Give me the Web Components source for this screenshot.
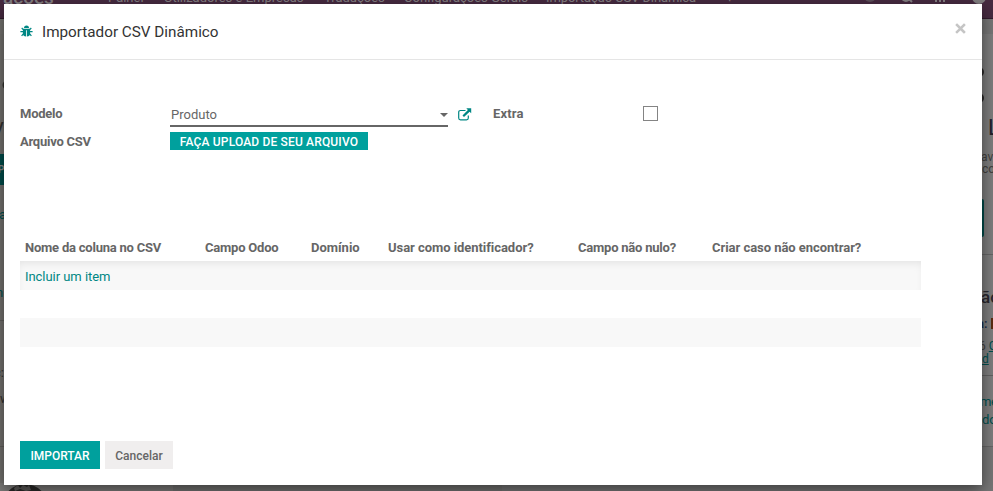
<!DOCTYPE html>
<html lang="pt">
<head>
<meta charset="utf-8">
<title>Importador CSV Dinâmico</title>
<style>
html,body{margin:0;height:491px;overflow:hidden}
body{font-family:Roboto,"Noto Sans",sans-serif;font-size:13px;color:#666;background:#7d7b79}
</style>
</head>
<body>
<app-shell>
  <app-backdrop></app-backdrop>
  <modal-dialog slot="dialog" heading="Importador CSV Dinâmico">
    <import-form></import-form>
    <field-table></field-table>
    <action-button slot="footer" kind="primary">IMPORTAR</action-button>
    <action-button slot="footer">Cancelar</action-button>
  </modal-dialog>
</app-shell>
<script>
function define(name, html) {
  customElements.define(name, class extends HTMLElement {
    constructor() {
      super();
      const t = document.createElement('template');
      t.innerHTML = html;
      this.attachShadow({mode: 'open'}).append(t.content.cloneNode(true));
    }
    connectedCallback() {
      const h = this.shadowRoot.querySelector('[data-heading]');
      if (h) h.textContent = this.getAttribute('heading');
    }
  });
}

define('app-shell', `<style>
:host{display:block;position:relative;width:993px;height:491px;overflow:hidden}
::slotted([slot=dialog]){position:absolute;left:4px;top:4px}
</style><slot></slot><slot name="dialog"></slot>`);

define('nav-strip', `<style>
:host{display:block;height:18px;background:#472b41;border-bottom:1px solid #321c2d;overflow:hidden;color:#858184;font-size:13px}
nav{display:flex;white-space:nowrap;margin-top:-11px;line-height:18px;height:29px}
b{font-size:19px;font-weight:500;width:108px;text-indent:3px}
span{flex:none}
svg{flex:none}
</style><nav><b>ações</b><span style="width:56px">Painel</span><span style="width:160px">Utilizadores e Empresas</span><span style="width:80px">Traduções</span><span style="width:142px">Configurações Gerais</span><span style="width:180px;letter-spacing:-.1px">Importação CSV Dinâmica</span><span>+</span>
<svg width="130" height="29" style="margin-left:129px"><circle cx="8" cy="7" r="6" fill="#5e505b"/><circle cx="44" cy="8" r="4" fill="none" stroke="#858184" stroke-width="2"/><path d="M47 10l3 3" stroke="#858184" stroke-width="2"/><path d="M74 13v-4M78 13v-4M82 13v-4" stroke="#858184" stroke-width="2"/><circle cx="117" cy="8" r="7" fill="#827f81"/></svg></nav>`);

define('left-peek', `<style>
:host{display:flex;flex-direction:column;width:30px;overflow:hidden;color:#343230;font-size:13px;white-space:nowrap}
div{flex:none;box-sizing:border-box;overflow:hidden}
.t{color:#00504f}
</style>
<div style="height:15px;background:#777572"></div>
<svg width="10" height="86" style="flex:none"><circle cx="7" cy="51" r="4.500" fill="#343230"/></svg>
<div style="height:34px;font-size:20px;line-height:21px;text-indent:-9px">V</div>
<div style="height:31px;background:#004d4b;color:#888;line-height:31px;font-weight:700;font-size:10px;text-indent:-2px">P</div>
<div style="height:79px;line-height:60px;text-indent:-1px" class="t">a</div>
<div style="height:57px;border-bottom:1px solid #62605d;line-height:58px;text-indent:-4px" class="t">n</div>
<div style="height:8px"></div>
<div style="height:118px;border-bottom:1px solid #62605d;line-height:26px;text-indent:-6px;padding-top:31px">c:<br>wo</div>
<div style="height:44px"></div>`);

define('right-peek', `<style>
:host{display:flex;flex-direction:column;width:11px;overflow:hidden;color:#42413f;font-size:13px;white-space:nowrap;background:#7e7e7e}
div{flex:none;box-sizing:border-box}
.t{color:#00504f}
</style>
<div style="height:15px;background:#777"></div>
<div style="height:31px"></div>
<svg width="11" height="52" style="flex:none"><circle cx="-3" cy="7" r="5" fill="#292828"/><circle cx="-3" cy="33" r="5" fill="#292828"/></svg>
<div style="height:34px;font-size:22px;line-height:22px;text-indent:6px;color:#23212a">L</div>
<div style="height:48px;line-height:12px;font-size:12px;text-indent:-1px">av<br>cor</div>
<div style="height:38px;width:2px;background:#004b49;border-radius:0 4px 4px 0"></div>
<div style="height:18px;border-bottom:1px solid #666"></div>
<div style="height:56px;line-height:85px;font-size:17px;font-weight:500;text-indent:-1px;color:#29272d">ão</div>
<div style="height:27px;line-height:25px;text-indent:-5px;color:#172c4a;font-weight:500">a:<span style="display:inline-block;width:5px;height:11px;background:#5c2b10;margin-left:4px;vertical-align:-1px"></span></div>
<div style="height:37px;line-height:13px;font-size:12px;text-indent:-3px;padding-top:2px">6 <u class="t">C</u><br><u class="t">d</u></div>
<div style="height:17px;border-top:1px solid #626262"></div>
<div style="height:18px;line-height:20px;text-indent:-2px;letter-spacing:-.3px" class="t">me</div>
<div style="height:37px;line-height:20px;border-bottom:1px solid #666" class="t">do</div>
<div style="height:44px;background:#777"></div>`);

define('app-backdrop', `<style>
:host{display:block;height:491px}
main{display:flex;justify-content:space-between;height:472px;background:linear-gradient(#777 0 452px,#737271 452px)}
left-peek{background:#757370}
.avatar{align-self:flex-end;margin-left:-30px}
</style><nav-strip></nav-strip><main><left-peek></left-peek>
<svg class="avatar" width="982" height="8"><rect width="173" height="8" fill="#7c7b79"/><circle cx="25" cy="24" r="23" fill="#2b2928"/><path d="M14 5l4-3 2 3 3-3 4 2 2-2 2 5-5 1-6-2-5 2z" fill="#5d5b59"/><rect x="502" width="480" height="8" fill="#777"/></svg>
<right-peek></right-peek></main>`);

define('modal-dialog', `<style>
:host{display:flex;flex-direction:column;width:978px;height:481px;background:#fff;box-shadow:0 5px 15px rgba(0,0,0,.5)}
header{display:flex;height:55px;border-bottom:1px solid #e5e5e5;align-items:center;padding:0 15px 0 16px}
.bug{margin:0 9px 0 0}
h4{margin:0;flex:1;font-size:15.25px;font-weight:400;color:#333;line-height:18px}
.x{margin-top:-7px}
section{flex:1;padding:40px 16px 0}
footer{display:flex;gap:5px;padding:0 16px 16px}
</style>
<header><svg class="bug" width="13" height="13" viewBox="0 0 13 13"><path d="M3.500 4.800L1.700 3M9.500 4.800L11.300 3M3.500 6.700H.4M9.500 6.700h3.100M3.700 8.500L1.600 10.800M9.300 8.500l2.100 2.300" fill="none" stroke="#008784" stroke-width="1.200"/><path d="M4 3a2.500 2.500 0 0 1 5 0zM2.900 3.700h7.200v4.500q0 3.300-3.200 3.300V5.300h-.8v6.200q-3.200 0-3.200-3.300z" fill="#008784"/></svg><h4 data-heading></h4><svg class="x" width="13" height="13" viewBox="0 0 13 13"><path d="M3 3l7 7M10 3L3 10" stroke="#c5c5c5" stroke-width="2.500" stroke-linecap="square"/></svg></header>
<section><slot></slot></section><footer><slot name="footer"></slot></footer>`);

define('model-select', `<style>
:host{display:flex;align-items:center;box-sizing:border-box;width:278px;height:24px;border-bottom:2px solid #666;padding:1px 0 0 1px}
span{flex:1}
</style><span>Produto</span><svg width="8" height="4"><path d="M0 0h8L4 4z" fill="#666"/></svg>`);

define('check-box', `<style>:host{display:block;box-sizing:border-box;width:15px;height:15px;border:1px solid #848484;background:#fff}</style>`);

define('import-form', `<style>
:host{display:grid;grid-template-columns:150px 278px 45px 150px auto;height:136px;grid-template-rows:28px 28px;align-items:start}
b{font-weight:700;color:#666;line-height:16px;margin-top:6px;font-size:13px;letter-spacing:-.25px}
.up{width:198px;height:18px;margin-top:4px;background:#00a09d;color:#fff;font-size:12px;font-weight:500;line-height:20px;text-align:center;white-space:nowrap;letter-spacing:.16px}
model-select{margin-top:3px}
check-box{margin-top:6px}
svg{margin:8px 0 0 10px}
</style>
<b>Modelo</b><model-select></model-select>
<svg width="14" height="13" viewBox="0 0 14 13"><path d="M7.500 2.500H2.500Q.7 2.500.7 4.300V10Q.7 11.800 2.500 11.800H8.500Q10.300 11.800 10.300 10V7.500" fill="none" stroke="#008784" stroke-width="1.200"/><path d="M8.300.3h4.900v4.900L11.600 3.700 6 9.100 4.500 7.600 9.900 2z" fill="#008784"/></svg>
<b style="letter-spacing:.15px">Extra</b><check-box></check-box>
<b>Arquivo CSV</b><div class="up">FAÇA UPLOAD DE SEU ARQUIVO</div>`);

define('field-table', `<style>
:host{display:block;width:901px}
.head{display:grid;grid-template-columns:180px 106px 77px 190px 134px auto;padding-left:5px;height:25px;line-height:24px;font-weight:700;white-space:nowrap;color:#666}
.row{height:28px;box-sizing:border-box;padding-left:5px;line-height:31px;color:#008784;letter-spacing:-.05px}
.first{height:29px;background:#f8f8f8;box-shadow:inset 0 5px 8px -3px rgba(0,0,0,.09)}
.odd{height:29px;background:#f8f8f8}
</style><div class="head"><span style="letter-spacing:-.22px">Nome da coluna no CSV</span><span style="letter-spacing:-.22px">Campo Odoo</span><span>Domínio</span><span style="letter-spacing:-.05px">Usar como identificador?</span><span style="letter-spacing:-.22px">Campo não nulo?</span><span style="letter-spacing:-.04px">Criar caso não encontrar?</span></div>
<div class="row first">Incluir um item</div><div class="row"></div><div class="row odd"></div>`);

define('action-button', `<style>
:host{display:block;box-sizing:border-box;height:28px;width:68px;line-height:30px;text-align:center;background:#f0eeee;color:#666;font-size:12px;font-weight:500}
:host([kind=primary]){width:80px;background:#00a09d;color:#fff}
</style><slot></slot>`);
</script>
</body>
</html>
